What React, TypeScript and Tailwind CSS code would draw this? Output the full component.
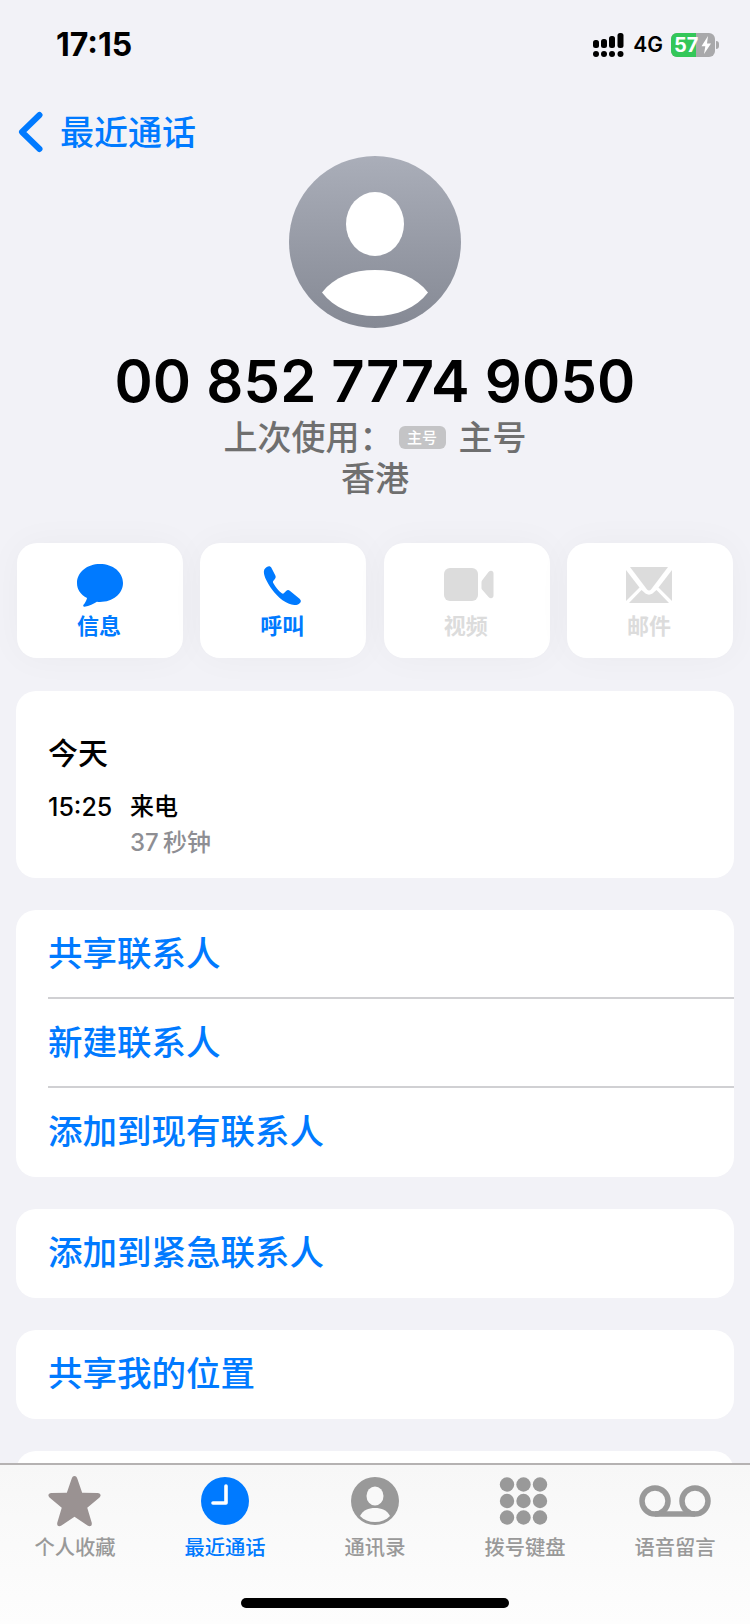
import React from "react";

const FONT = "font-['Inter','Noto_Sans_CJK_SC',sans-serif]";

function Signal() {
  return (
    <svg width="31" height="24" viewBox="0 0 31 24" fill="#000">
      <rect x="0" y="7" width="6" height="8" rx="2.5" />
      <rect x="8" y="6" width="6" height="9" rx="2.5" />
      <rect x="16" y="3" width="6" height="12" rx="2.5" />
      <rect x="24.500" y="0" width="6" height="15" rx="2.5" />
      <circle cx="3" cy="21" r="3" />
      <circle cx="11" cy="21" r="3" />
      <circle cx="19" cy="21" r="3" />
      <circle cx="27.500" cy="21" r="3" />
    </svg>
  );
}

function Battery() {
  return (
    <div className="flex items-center">
      <div className="relative flex h-[24px] w-[44px] overflow-hidden rounded-[6px] bg-[#a9a9ab]">
        <div className="flex h-full w-[25px] items-center justify-end bg-[#34c759]" />
        <span className="absolute left-[3px] top-0 text-[20px] font-bold leading-[24px] text-white">57</span>
        <svg className="absolute left-[30px] top-[3px]" width="11" height="18" viewBox="0 0 11 18" fill="#fff">
          <path d="M7 0 0.5 10.2h3.8L3 18l7-10.6H6z" />
        </svg>
      </div>
      <div className="ml-[1px] h-[8px] w-[3px] rounded-r-full bg-[#a9a9ab]" />
    </div>
  );
}

function Avatar() {
  return (
    <div className="relative h-[172px] w-[172px] rounded-full bg-gradient-to-b from-[#aaaeb9] to-[#858994]">
      <svg className="absolute inset-0" width="172" height="172" viewBox="0 0 172 172" fill="#fff">
        <ellipse cx="86" cy="68" rx="29" ry="32" />
        <path d="M33 136.500C45 121 64 114 86 114s41 7 53 22.500C127 152 108 160 86 160s-41-8-53-23.500z" />
      </svg>
    </div>
  );
}

function MessageIcon() {
  return (
    <svg width="46" height="43" viewBox="0 0 48 44" fill="#007aff" preserveAspectRatio="none">
      <path d="M24 0C10.700 0 0 8.200 0 19.500 0 26.300 3.800 31.500 10.500 34.800 9.800 37.500 8.300 40 6.800 41.800 6 42.800 6.600 44 7.800 43.800 12.800 43 17.500 40.500 20.800 38.500 21.800 38.700 23 38.800 24 38.800 37.300 38.800 48 30.600 48 19.400 48 8.200 37.300 0 24 0z" />
    </svg>
  );
}

function PhoneIcon() {
  return (
    <svg className="mr-[2px]" width="38" height="39" viewBox="0 0 40 40" fill="#007aff" preserveAspectRatio="none">
      <path d="M4.500 0.800C6 -0.200 8 0.200 8.800 1.800L13 9.800C13.600 11 13.400 12.300 12.500 13.300L11 15C10.400 15.700 10.300 16.600 10.800 17.400 13.200 21.700 16.300 25.200 19.800 28 20.600 28.600 21.500 28.500 22.200 27.800L24.600 25.500C25.600 24.500 27.100 24.500 28.200 25.400L38.500 33.500C40 34.700 40.300 36.400 39.200 37.700 37.700 39.400 35.500 40.300 33 40 25 39.300 15.800 32.500 9.500 24 4 16.500 0.300 9.500 1 5 1.300 3.200 2.800 1.700 4.500 0.800z" />
    </svg>
  );
}

function VideoIcon() {
  return (
    <svg className="ml-[5px]" width="50" height="34" viewBox="0 0 50 34" fill="#dcdcdc">
      <rect x="0" y="0" width="34" height="33" rx="6" />
      <path d="M38 12.500 44.500 4C46.500 1.800 49.500 2.500 49.500 5.500V27.500C49.500 30.500 46.500 31.200 44.500 29L38 21.500C37.500 20.800 37.500 20 37.500 19.500V14.500C37.500 13.800 37.600 13 38 12.500z" />
    </svg>
  );
}

function MailIcon() {
  return (
    <svg className="mr-[2px]" width="46" height="36" viewBox="0 0 46 36" fill="#dcdcdc">
      <path d="M4 0H42L25 22.500C24 23.800 22 23.800 21 22.500z" />
      <path d="M0 3 13.500 20.500 0 34z" />
      <path d="M46 3 32.500 20.500 46 34z" />
      <path d="M3 36 15.500 23 19.500 26.500C21.500 28 24.500 28 26.500 26.500L30.500 23 43 36z" />
    </svg>
  );
}

function ActionButton({ icon, label, on }: { icon: React.ReactNode; label: string; on?: boolean }) {
  return (
    <div className="flex h-[115px] w-[166px] flex-col items-center rounded-[20px] bg-white pt-[20px] shadow-[0_0_36px_rgba(0,0,0,0.035)]">
      <div className="flex h-[44px] w-full items-center justify-center">{icon}</div>
      <span className={`mr-[2px] mt-[5px] text-[22px] font-semibold leading-[28px] ${on ? "text-[#007aff]" : "text-[#dcdcdc]"}`}>{label}</span>
    </div>
  );
}

function LinkRow({ label, divider }: { label: string; divider?: boolean }) {
  return (
    <div className="relative flex h-[89px] items-center pl-[32px]">
      <span className="text-[34.500px] font-medium leading-none text-[#007aff]">{label}</span>
      {divider && <div className="absolute bottom-0 left-[32px] right-0 h-[2px] bg-[#d0d0d3]" />}
    </div>
  );
}

function Tab({ icon, label, on, iconShift }: { icon: React.ReactNode; label: string; on?: boolean; iconShift?: string }) {
  return (
    <div className="flex flex-col items-center">
      <div className={`flex h-[52px] items-center justify-center ${iconShift ?? ""}`}>{icon}</div>
      <span className={`mt-[7px] text-[20.300px] font-medium leading-[28px] ${on ? "text-[#007aff]" : "text-[#999999]"}`}>{label}</span>
    </div>
  );
}

function Star() {
  return (
    <svg width="53" height="51" viewBox="0 0 54 52" fill="#9a9292">
      <path d="M27 0C28.500 0 29.400 1.200 30 3L34.800 17.200 50.500 17.300C53.500 17.300 54.700 19.800 52.500 21.800L40 32.300 44.500 47.500C45.300 50.700 43 52.300 40.300 50.500L27 41.500 13.700 50.500C11 52.300 8.700 50.700 9.500 47.500L14 32.300 1.500 21.800C-0.700 19.800 0.500 17.300 3.500 17.300L19.200 17.200 24 3C24.600 1.200 25.500 0 27 0z" />
    </svg>
  );
}

function Clock() {
  return (
    <svg width="48" height="48" viewBox="0 0 48 48">
      <circle cx="24" cy="24" r="24" fill="#007aff" />
      <path d="M25 9V26H12" fill="none" stroke="#fff" strokeWidth="3.600" strokeLinecap="round" strokeLinejoin="round" />
    </svg>
  );
}

function Contact() {
  return (
    <svg width="48" height="48" viewBox="0 0 48 48">
      <circle cx="24" cy="24" r="24" fill="#999999" />
      <ellipse cx="24" cy="19" rx="8.500" ry="9.500" fill="#f9f9f9" />
      <path d="M9 39C12 33 17.500 31 24 31s12 2 15 8c-4 4-9 6-15 6s-11-2-15-6z" fill="#f9f9f9" />
    </svg>
  );
}

function Keypad() {
  const xs = [8, 24.500, 41];
  const ys = [7.500, 24, 40.500];
  return (
    <svg width="49" height="48" viewBox="0 0 49 48" fill="#999999">
      {ys.map((y) => xs.map((x) => <circle key={`${x}-${y}`} cx={x} cy={y} r="7.200" />))}
    </svg>
  );
}

function Voicemail() {
  return (
    <svg width="72" height="32" viewBox="0 0 72 32" fill="none" stroke="#999999" strokeWidth="5.500">
      <circle cx="16" cy="16" r="13" />
      <circle cx="56" cy="16" r="13" />
      <path d="M16 29H56" />
    </svg>
  );
}

export default function App() {
  return (
    <div className={`flex h-[1624px] w-[750px] flex-col overflow-hidden bg-[#f2f2f7] ${FONT}`}>
      <div className="min-h-0 flex-1 overflow-hidden">
        {/* status bar */}
        <div className="flex h-[88px] items-start justify-between pl-[56px] pr-[31px] pt-[24px]">
          <span className="text-[32px] font-bold leading-[42px] text-black">17:15</span>
          <div className="flex items-center pt-[9px]">
            <Signal />
            <span className="ml-[9px] text-[21px] font-semibold leading-[24px] text-black">4G</span>
            <div className="ml-[8px]"><Battery /></div>
          </div>
        </div>

        {/* nav */}
        <div className="flex h-[68px] items-start pl-[18px] pt-[23px]">
          <svg width="26" height="42" viewBox="0 0 26 42" fill="none" stroke="#007aff" strokeWidth="6" strokeLinecap="round" strokeLinejoin="round">
            <path d="M21.500 4 4 21 21.500 38" />
          </svg>
          <span className="ml-[16px] text-[34px] font-medium leading-[44px] text-[#007aff]">最近通话</span>
        </div>

        {/* hero */}
        <div className="flex flex-col items-center">
          <Avatar />
          <div className="mt-[17px] text-[58px] font-semibold leading-[72px] tracking-[0.2px] text-black">00 852 7774 9050</div>
          <div className="flex h-[41px] items-center text-[34px] font-medium leading-[41px] text-[#6f6f6f]">
            <span>上次使用：</span>
            <span className="ml-[5px] flex h-[23px] w-[47px] items-center justify-center rounded-[6px] bg-[#c4c4c6] text-[15px] leading-none text-white">主号</span>
            <span className="ml-[13px]">主号</span>
          </div>
          <div className="text-[34px] font-medium leading-[41px] text-[#6f6f6f]">香港</div>
        </div>

        {/* actions */}
        <div className="mt-[44px] flex justify-between pl-[17px] pr-[17px]">
          <ActionButton on icon={<MessageIcon />} label="信息" />
          <ActionButton on icon={<PhoneIcon />} label="呼叫" />
          <ActionButton icon={<VideoIcon />} label="视频" />
          <ActionButton icon={<MailIcon />} label="邮件" />
        </div>

        {/* cards */}
        <div className="mx-[16px] mt-[33px] flex flex-col gap-[32px]">
          <div className="h-[187px] rounded-[20px] bg-white pl-[32px] pt-[42px]">
            <div className="text-[30px] font-medium leading-[40px] text-black">今天</div>
            <div className="mt-[16px] flex h-[36px] items-center text-[24px] font-medium leading-[36px] text-black">
              <span className="w-[82px] text-[25px]">15:25</span>
              <span>来电</span>
            </div>
            <div className="pl-[82px] text-[24px] font-medium leading-[36px] text-[#8e8e93]">37{"\u2009"}秒钟</div>
          </div>
          <div className="rounded-[20px] bg-white">
            <LinkRow label="共享联系人" divider />
            <LinkRow label="新建联系人" divider />
            <LinkRow label="添加到现有联系人" />
          </div>
          <div className="rounded-[20px] bg-white"><LinkRow label="添加到紧急联系人" /></div>
          <div className="rounded-[20px] bg-white"><LinkRow label="共享我的位置" /></div>
          <div className="h-[89px] rounded-[20px] bg-white" />
        </div>
      </div>

      {/* tab bar */}
      <div className="h-[161px] shrink-0 border-t-[2px] border-[#b5b2b2] bg-gradient-to-b from-[#f7f7f7] to-[#fdfdfd]">
        <div className="grid grid-cols-5 pt-[10px]">
          <Tab iconShift="mr-[2px]" icon={<Star />} label="个人收藏" />
          <Tab on icon={<Clock />} label="最近通话" />
          <Tab icon={<Contact />} label="通讯录" />
          <Tab iconShift="mr-[4px]" icon={<Keypad />} label="拨号键盘" />
          <Tab icon={<Voicemail />} label="语音留言" />
        </div>
        <div className="mx-auto mt-[36px] h-[10px] w-[268px] rounded-full bg-black" />
      </div>
    </div>
  );
}
